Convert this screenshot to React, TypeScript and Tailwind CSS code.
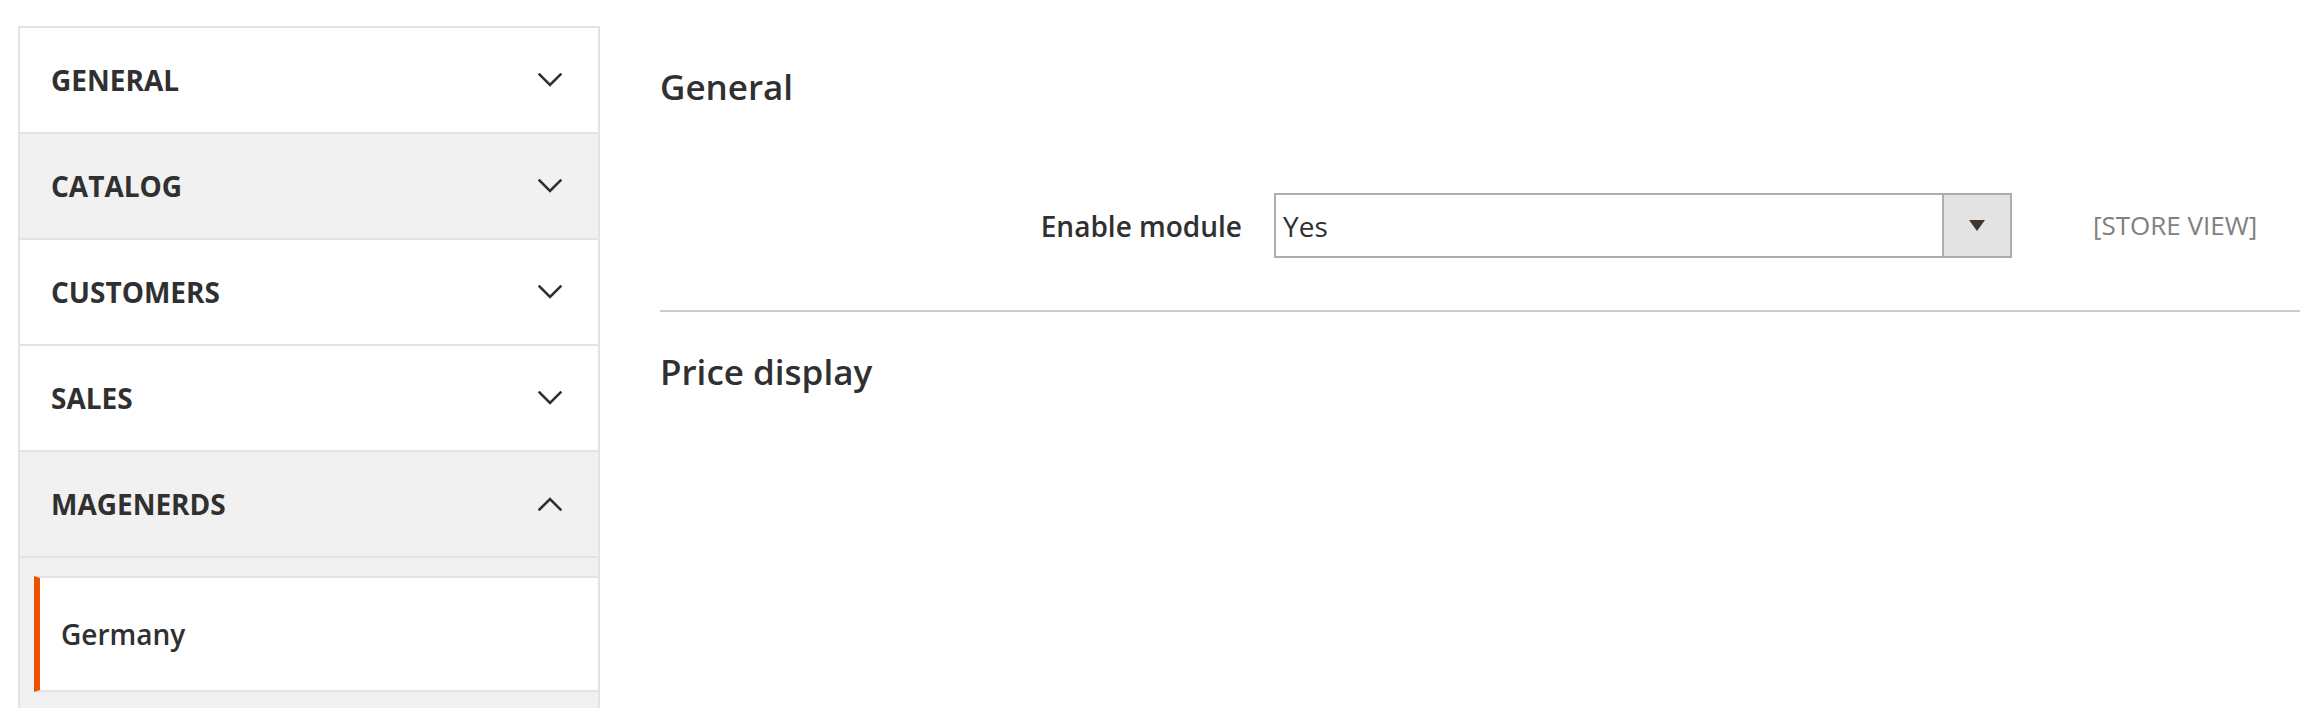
import React from 'react'

type NavSection = { title: string; shaded: boolean; open?: boolean }

const sections: NavSection[] = [
  { title: 'General', shaded: false },
  { title: 'Catalog', shaded: true },
  { title: 'Customers', shaded: false },
  { title: 'Sales', shaded: false },
  { title: 'Magenerds', shaded: true, open: true },
]

const Chevron = ({ up }: { up?: boolean }) => (
  <svg width="24" height="14" viewBox="0 0 24 14" fill="none" className="shrink-0">
    <polyline
      points={up ? '1.5,12.5 12,2 22.5,12.5' : '1.5,1.5 12,12 22.5,1.5'}
      stroke="#303030"
      strokeWidth="2.6"
      strokeLinecap="square"
    />
  </svg>
)

/**
 * Left-hand config navigation.
 */
const ConfigNav = () => {
  return (
    <aside className="w-[582px] shrink-0 border-x-2 border-t-2 border-[#e3e3e3] bg-[#f1f1f1]">
      {sections.map((s) => (
        <div key={s.title}>
          <div
            className={`flex h-[106px] items-center justify-between border-b-2 border-[#e3e3e3] pl-[31px] pr-[36px] ${
              s.shaded ? 'bg-[#f1f1f1]' : 'bg-white'
            }`}
          >
            <span className="text-[28px] font-bold uppercase text-[#303030]">{s.title}</span>
            <Chevron up={s.open} />
          </div>
          {s.open && (
            <div className="pt-[18px] pl-[14px]">
              <div className="flex h-[116px] items-center border-y-2 border-l-[6px] border-y-[#e3e3e3] border-l-[#eb5202] bg-white pl-[21px]">
                <span className="text-[28px] font-semibold text-[#303030]">Germany</span>
              </div>
            </div>
          )}
        </div>
      ))}
    </aside>
  )
}

export default function App() {
  return (
    <div
      className="flex h-[708px] overflow-hidden bg-white pl-[18px] pt-[26px]"
      style={{ fontFamily: '"Open Sans", "Noto Sans", sans-serif' }}
    >
      <ConfigNav />

      <main className="ml-[60px] flex-1">
        <h2 className="mt-[38px] text-[35px] font-semibold leading-[46px] text-[#303030]">General</h2>

        <div className="mt-[83px] flex h-[65px] items-center">
          <label className="w-[582px] shrink-0 text-right text-[28px] font-semibold text-[#303030]">
            Enable module
          </label>
          <div className="ml-[32px] flex h-[65px] w-[738px] shrink-0 border-2 border-[#adadad] bg-white">
            <span className="flex flex-1 items-center pl-[7px] text-[28px] text-[#303030]">Yes</span>
            <div className="flex w-[68px] items-center justify-center border-l-2 border-[#adadad] bg-[#e3e3e3]">
              <svg width="16" height="11" viewBox="0 0 16 11">
                <polygon points="0,0 16,0 8,11" fill="#41362f" />
              </svg>
            </div>
          </div>
          <span className="ml-[81px] text-[26px] text-[#808080]">[STORE VIEW]</span>
        </div>

        <div className="mt-[52px] h-[2px] bg-[#cccccc]" />

        <h2 className="mt-[37px] text-[35px] font-semibold leading-[46px] text-[#303030]">Price display</h2>
      </main>
    </div>
  )
}
